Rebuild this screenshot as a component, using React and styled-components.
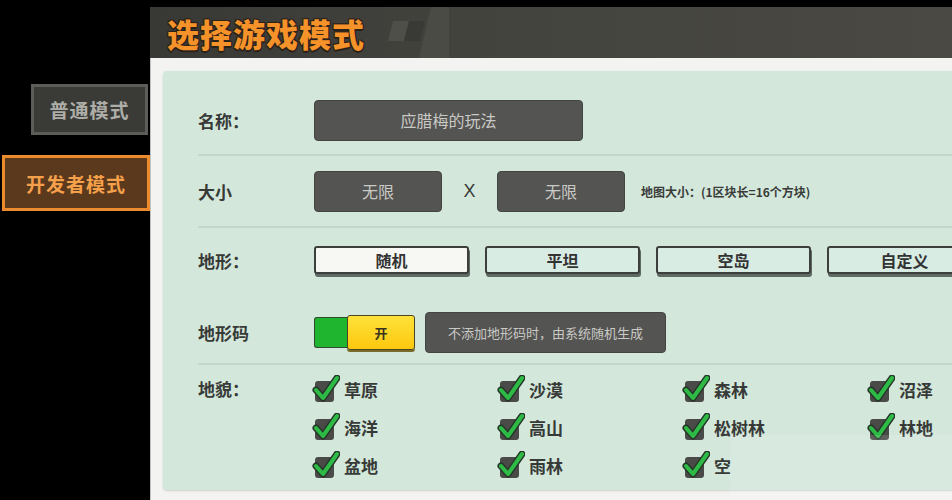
import styled, { createGlobalStyle } from "styled-components";

const GlobalStyle = createGlobalStyle`
  html, body {
    margin: 0;
    padding: 0;
    background: #000;
    font-family: "Noto Sans CJK SC", "Noto Sans", sans-serif;
  }
`;

const Page = styled.div`
  width: 952px;
  height: 500px;
  display: flex;
  overflow: hidden;
  background: #000;
  position: relative;
`;

const Sidebar = styled.div`
  width: 150px;
  flex-shrink: 0;
  display: flex;
  flex-direction: column;
  align-items: flex-end;
  padding-top: 84px;
  gap: 20px;
  box-sizing: border-box;
`;

const Tab = styled.div`
  box-sizing: border-box;
  width: ${(p) => (p.$active ? "148px" : "117px")};
  height: ${(p) => (p.$active ? "56px" : "51px")};
  margin-right: ${(p) => (p.$active ? "0" : "2px")};
  border: 3px solid ${(p) => (p.$active ? "#ec8b2e" : "#5c5c58")};
  background: ${(p) => (p.$active ? "#5a391d" : "#3a3a37")};
  color: ${(p) => (p.$active ? "#f5a04a" : "#aeaea8")};
  font-size: 19px;
  font-weight: 700;
  display: flex;
  align-items: center;
  justify-content: center;
  letter-spacing: 1px;
`;

const Main = styled.div`
  flex: 1;
  display: flex;
  flex-direction: column;
  padding-top: 7px;
  min-width: 0;
`;

const TitleBar = styled.div`
  height: 51px;
  display: flex;
  align-items: center;
  padding-left: 17px;
  background: linear-gradient(90deg, #383835 0%, #43433e 40%, #4a4943 100%);
  overflow: hidden;
`;

const Title = styled.h1`
  margin: 0;
  font-size: 32px;
  font-weight: 900;
  color: #f59229;
  letter-spacing: 1px;
  text-shadow: -1px -1px 0 #2a2118, 1px -1px 0 #2a2118, -1px 1px 0 #2a2118,
    1px 1px 0 #2a2118, 0 2px 0 #2a2118;
`;

const Deco = styled.svg`
  margin-left: 14px;
  flex-shrink: 0;
`;

const Frame = styled.div`
  flex: 1;
  background: #f3f4f2;
  border-left: 1px solid #bfc2bf;
  padding: 13px 0 10px 12px;
  display: flex;
`;

const Panel = styled.div`
  width: 860px;
  flex-shrink: 0;
  background: #d3e8db;
  border-radius: 4px;
  box-shadow: 0 1px 2px rgba(0, 0, 0, 0.15);
  padding: 15px 0 0 35px;
  box-sizing: border-box;
`;

const Row = styled.div`
  display: flex;
  align-items: ${(p) => (p.$top ? "flex-start" : "center")};
  height: ${(p) => p.$h}px;
  padding-top: ${(p) => p.$pt || 0}px;
  box-sizing: border-box;
  border-bottom: ${(p) => (p.$line ? "2px solid #c2d9ca" : "none")};
`;

const Label = styled.div`
  width: 116px;
  flex-shrink: 0;
  font-size: 17px;
  font-weight: 700;
  color: #383a38;
  padding-top: ${(p) => p.$pt || 0}px;
`;

const DarkBox = styled.div`
  box-sizing: border-box;
  width: ${(p) => p.$w}px;
  height: 41px;
  background: #545452;
  border: 1px solid #444442;
  border-radius: 4px;
  color: #c9c9c5;
  font-size: ${(p) => p.$fs || 16}px;
  display: flex;
  align-items: center;
  justify-content: center;
  flex-shrink: 0;
`;

const Times = styled.span`
  width: 55px;
  text-align: center;
  font-size: 18px;
  color: #3a3a3a;
  font-family: "Liberation Sans", sans-serif;
`;

const Note = styled.span`
  margin-left: 16px;
  font-size: 12px;
  font-weight: 700;
  color: #3a3c3a;
`;

const Options = styled.div`
  display: flex;
  gap: 16px;
`;

const Option = styled.div`
  box-sizing: border-box;
  width: 155px;
  height: 28px;
  border: 2px solid #3c3f3c;
  border-radius: 3px;
  background: ${(p) => (p.$selected ? "#f7f7f4" : "#d8ece4")};
  box-shadow: 1px 3px 0 #5f6a64;
  color: #333;
  font-size: 16px;
  font-weight: 700;
  display: flex;
  align-items: center;
  justify-content: center;
  flex-shrink: 0;
`;

const Toggle = styled.div`
  display: flex;
  align-items: center;
  margin-right: 10px;
  flex-shrink: 0;
`;

const ToggleTrack = styled.div`
  width: 34px;
  height: 31px;
  background: #1fb52f;
  border: 1px solid #2f4a2f;
  border-right: none;
  border-radius: 3px 0 0 3px;
  box-sizing: border-box;
`;

const ToggleKnob = styled.div`
  width: 68px;
  height: 35px;
  box-sizing: border-box;
  background: linear-gradient(#ffe23a, #fcc80f);
  border: 1px solid #4b4420;
  border-radius: 3px;
  box-shadow: 0 2px 0 #7a6a2a;
  margin-left: -1px;
  font-size: 13px;
  font-weight: 700;
  color: #3a3320;
  display: flex;
  align-items: center;
  justify-content: center;
`;

const Grid = styled.div`
  display: grid;
  grid-template-columns: repeat(4, 185px);
  grid-auto-rows: 38px;
  margin-left: -2px;
`;

const Check = styled.div`
  display: flex;
  align-items: center;
  gap: 4px;
  font-size: 17px;
  font-weight: 700;
  color: #383a38;
`;

const Watermark = styled.div`
  position: absolute;
  left: 730px;
  top: 435px;
  width: 222px;
  height: 65px;
  background: rgba(255, 255, 255, 0.12);
  pointer-events: none;
`;

const CheckIcon = () => (
  <svg width="28" height="28" viewBox="0 0 28 28">
    <rect x="3" y="6" width="19" height="21" rx="3" fill="#4a4b48" />
    <path
      d="M4 15 L11 23 L25 3"
      fill="none"
      stroke="#26372a"
      strokeWidth="7"
      strokeLinecap="round"
      strokeLinejoin="round"
    />
    <path
      d="M4 15 L11 23 L25 3"
      fill="none"
      stroke="#2dbb45"
      strokeWidth="4"
      strokeLinecap="round"
      strokeLinejoin="round"
    />
  </svg>
);

const terrains = ["随机", "平坦", "空岛", "自定义"];
const biomes = [
  "草原", "沙漠", "森林", "沼泽",
  "海洋", "高山", "松树林", "林地",
  "盆地", "雨林", "空",
];

export default function App() {
  return (
    <Page>
      <GlobalStyle />
      <Sidebar>
        <Tab>普通模式</Tab>
        <Tab $active>开发者模式</Tab>
      </Sidebar>
      <Main>
        <TitleBar>
          <Title>选择游戏模式</Title>
          <Deco width="70" height="51" viewBox="0 0 70 51">
            <polygon points="14,14 30,14 25,34 9,34" fill="#4f4f4a" />
            <polygon points="30,14 46,14 41,34 25,34" fill="#393935" />
            <polygon points="52,0 70,0 70,51 40,51" fill="#4b4b45" />
          </Deco>
        </TitleBar>
        <Frame>
          <Panel>
            <Row $h={70} $line>
              <Label>名称：</Label>
              <DarkBox $w={269}>应腊梅的玩法</DarkBox>
            </Row>
            <Row $h={72} $line>
              <Label>大小</Label>
              <DarkBox $w={128}>无限</DarkBox>
              <Times>X</Times>
              <DarkBox $w={128}>无限</DarkBox>
              <Note>地图大小：(1区块长=16个方块)</Note>
            </Row>
            <Row $h={64}>
              <Label>地形：</Label>
              <Options>
                {terrains.map((t, i) => (
                  <Option key={t} $selected={i === 0}>
                    {t}
                  </Option>
                ))}
              </Options>
            </Row>
            <Row $h={73} $pt={10} $line>
              <Label>地形码</Label>
              <Toggle>
                <ToggleTrack />
                <ToggleKnob>开</ToggleKnob>
              </Toggle>
              <DarkBox $w={241} $fs={13}>
                不添加地形码时，由系统随机生成
              </DarkBox>
            </Row>
            <Row $h={115} $top $pt={5}>
              <Label $pt={6}>地貌：</Label>
              <Grid>
                {biomes.map((b) => (
                  <Check key={b}>
                    <CheckIcon />
                    {b}
                  </Check>
                ))}
              </Grid>
            </Row>
          </Panel>
        </Frame>
      </Main>
      <Watermark />
    </Page>
  );
}
